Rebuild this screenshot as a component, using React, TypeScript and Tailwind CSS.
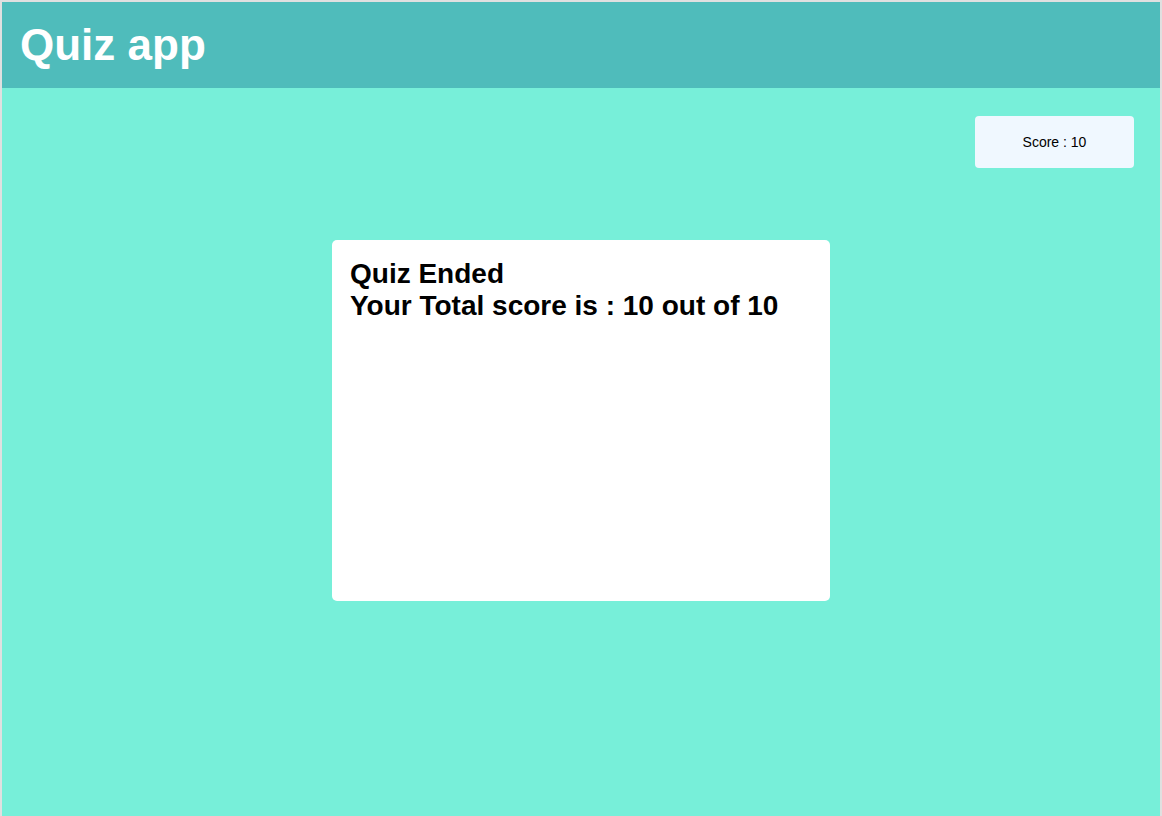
export default function App() {
  const score = 10;
  const total = 10;

  return (
    <div className="flex h-[816px] w-full flex-col border-x-2 border-t-2 border-[#e0e0e0] bg-[#77efd9] font-['Liberation_Sans',Arial,sans-serif]">
      {/* Header */}
      <header className="flex h-[86px] shrink-0 items-center bg-[#4fbcbb] px-[18px]">
        <h1 className="text-[44px] leading-[50px] font-bold text-white">Quiz app</h1>
      </header>

      <main className="flex flex-1 flex-col">
        <div className="flex justify-end pt-[28px] pr-[26px]">
          <div className="flex h-[52px] w-[159px] items-center justify-center rounded-[4px] bg-[#f0f8ff] text-[14px] text-black">
            Score : {score}
          </div>
        </div>

        <div className="flex justify-center pt-[72px]">
          <div className="h-[361px] w-[498px] rounded-[5px] bg-white px-[18px] pt-[18px]">
            <p className="text-[28px] leading-[32px] font-bold text-black">Quiz Ended</p>
            <p className="text-[28px] leading-[32px] font-bold text-black">
              Your Total score is : {score} out of {total}
            </p>
          </div>
        </div>
      </main>
    </div>
  );
}
